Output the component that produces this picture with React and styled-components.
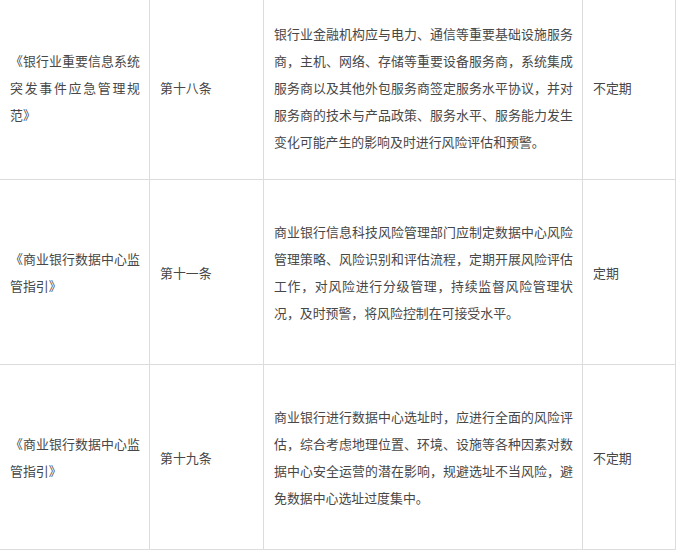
import React from "react";
import styled, { createGlobalStyle } from "styled-components";

const GlobalStyle = createGlobalStyle`
  html, body {
    margin: 0;
    padding: 0;
    background: #fff;
    overflow: hidden;
  }
`;

const Page = styled.div`
  width: 677px;
  height: 552px;
  overflow: hidden;
`;

const Table = styled.table`
  margin: -6px 0 0 -1px;
  width: 677px;
  table-layout: fixed;
  border-collapse: collapse;
  font-family: "Noto Sans CJK SC", "Noto Sans", sans-serif;
  font-size: 12.9px;
  line-height: 27px;
  color: #474747;
`;

const Col = styled.col`
  width: ${(props) => props.$width}px;
`;

const Row = styled.tr`
  height: 185px;
`;

const Cell = styled.td`
  border: 1px solid #dcdcdc;
  padding: 0 9px 0 10px;
  vertical-align: middle;
  text-align: ${(props) => (props.$justify ? "justify" : "left")};
  word-break: break-all;
`;

const columns = [150, 114, 319, 93];

const rows = [
  {
    law: "《银行业重要信息系统突发事件应急管理规范》",
    article: "第十八条",
    content:
      "银行业金融机构应与电力、通信等重要基础设施服务商，主机、网络、存储等重要设备服务商，系统集成服务商以及其他外包服务商签定服务水平协议，并对服务商的技术与产品政策、服务水平、服务能力发生变化可能产生的影响及时进行风险评估和预警。",
    cycle: "不定期",
  },
  {
    law: "《商业银行数据中心监管指引》",
    article: "第十一条",
    content:
      "商业银行信息科技风险管理部门应制定数据中心风险管理策略、风险识别和评估流程，定期开展风险评估工作，对风险进行分级管理，持续监督风险管理状况，及时预警，将风险控制在可接受水平。",
    cycle: "定期",
  },
  {
    law: "《商业银行数据中心监管指引》",
    article: "第十九条",
    content:
      "商业银行进行数据中心选址时，应进行全面的风险评估，综合考虑地理位置、环境、设施等各种因素对数据中心安全运营的潜在影响，规避选址不当风险，避免数据中心选址过度集中。",
    cycle: "不定期",
  },
];

export default function App() {
  return (
    <Page>
      <GlobalStyle />
      <Table>
        <colgroup>
          {columns.map((w, i) => (
            <Col key={i} $width={w} />
          ))}
        </colgroup>
        <tbody>
          {rows.map((row, i) => (
            <Row key={i}>
              <Cell $justify>{row.law}</Cell>
              <Cell>{row.article}</Cell>
              <Cell $justify>{row.content}</Cell>
              <Cell>{row.cycle}</Cell>
            </Row>
          ))}
        </tbody>
      </Table>
    </Page>
  );
}
